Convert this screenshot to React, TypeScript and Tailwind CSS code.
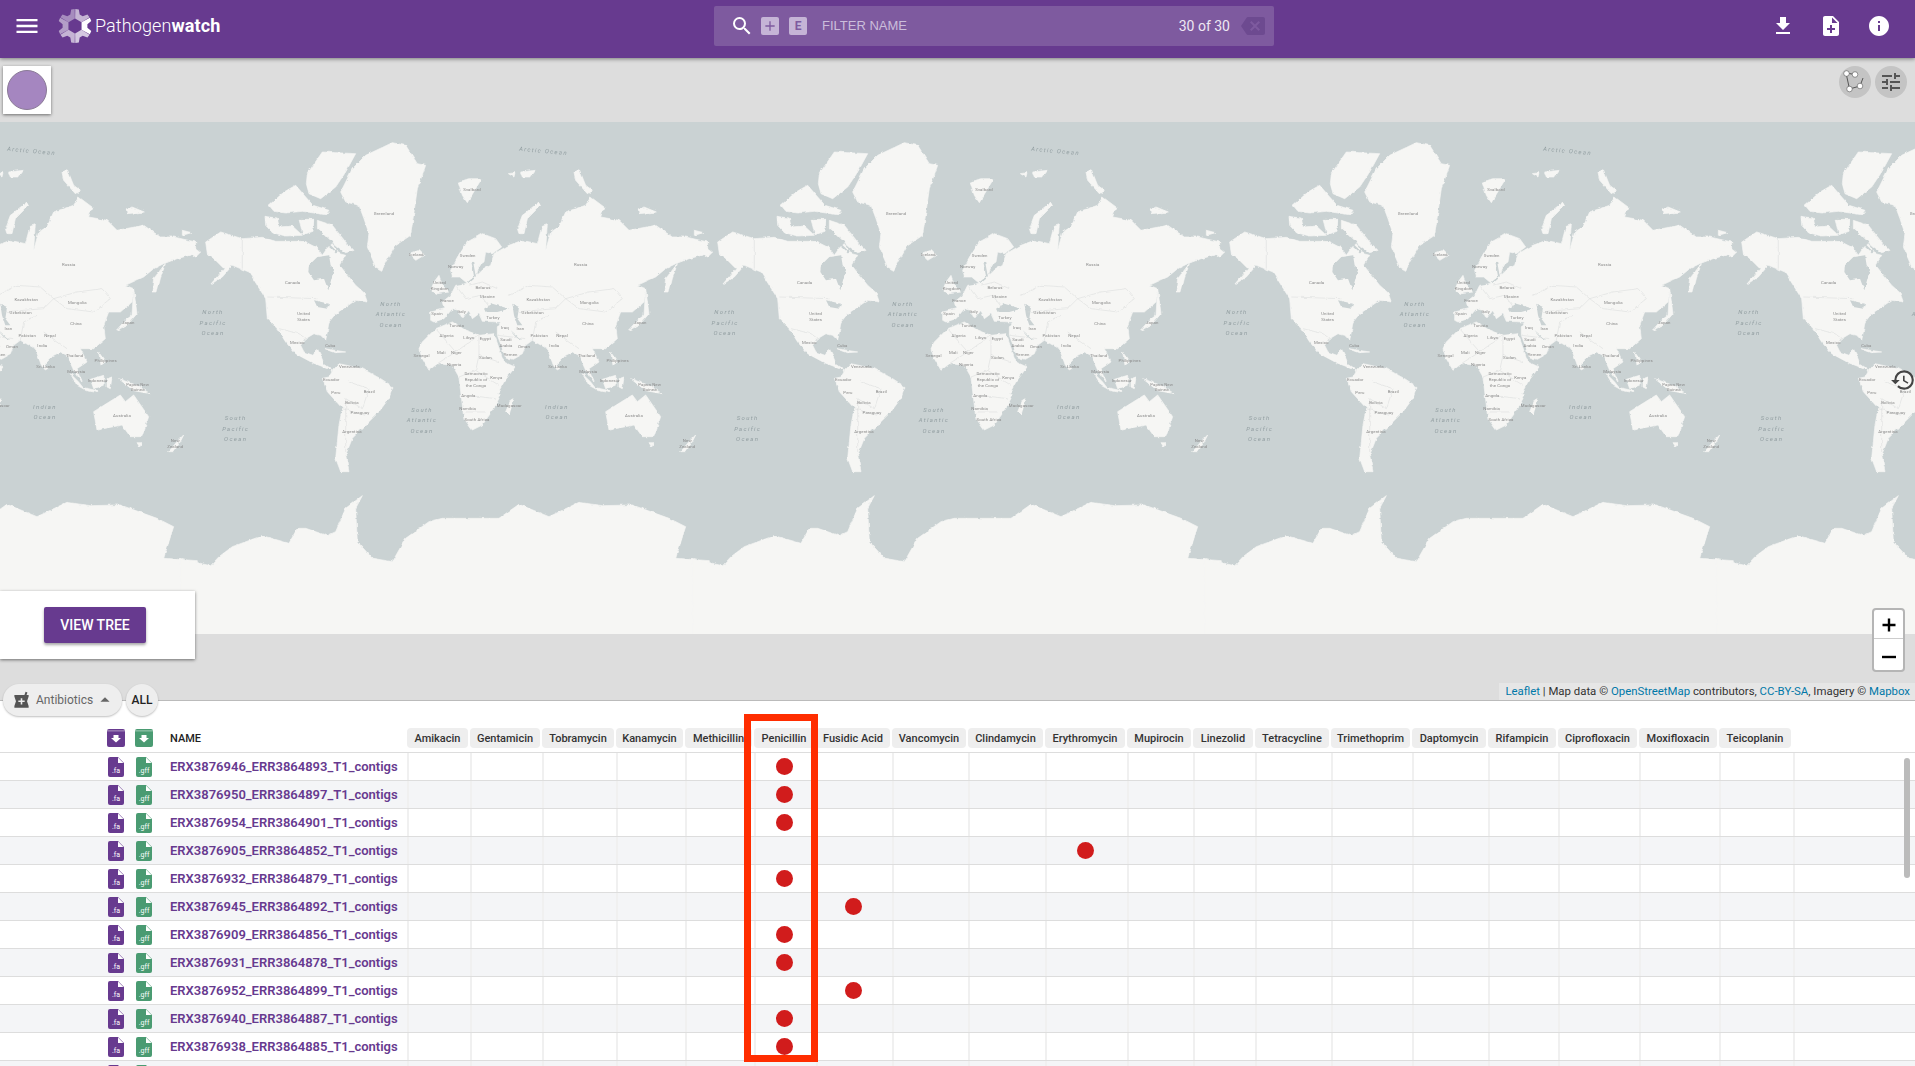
import { MdMenu, MdSearch, MdFileDownload, MdNoteAdd, MdInfo, MdTune, MdHistory, MdBackspace, MdArrowDropUp, MdLocalPharmacy, MdAdd } from 'react-icons/md'

const GRID = 'grid grid-cols-[407px_63px_72px_74px_69px_69px_62px_76px_76px_77px_82px_66px_62px_76px_81px_76px_70px_81px_80px_74px_1fr]'

const DRUGS = ['Amikacin', 'Gentamicin', 'Tobramycin', 'Kanamycin', 'Methicillin', 'Penicillin', 'Fusidic Acid', 'Vancomycin', 'Clindamycin', 'Erythromycin', 'Mupirocin', 'Linezolid', 'Tetracycline', 'Trimethoprim', 'Daptomycin', 'Rifampicin', 'Ciprofloxacin', 'Moxifloxacin', 'Teicoplanin']

const ROWS: [string, string][] = [
  ['ERX3876946_ERR3864893_T1_contigs', 'Penicillin'],
  ['ERX3876950_ERR3864897_T1_contigs', 'Penicillin'],
  ['ERX3876954_ERR3864901_T1_contigs', 'Penicillin'],
  ['ERX3876905_ERR3864852_T1_contigs', 'Erythromycin'],
  ['ERX3876932_ERR3864879_T1_contigs', 'Penicillin'],
  ['ERX3876945_ERR3864892_T1_contigs', 'Fusidic Acid'],
  ['ERX3876909_ERR3864856_T1_contigs', 'Penicillin'],
  ['ERX3876931_ERR3864878_T1_contigs', 'Penicillin'],
  ['ERX3876952_ERR3864899_T1_contigs', 'Fusidic Acid'],
  ['ERX3876940_ERR3864887_T1_contigs', 'Penicillin'],
  ['ERX3876938_ERR3864885_T1_contigs', 'Penicillin'],
  ['', ''], // only the tops of the icons show at the bottom edge
]

// land shapes, traced at 3x of one 512px map tile
const LAND = [
  'M50,360 L95,330 L160,350 L220,346 L260,358 L300,358 L345,358 L385,378 L400,400 L415,378 L430,365 L452,395 L470,400 L452,430 L472,455 L500,490 L525,512 L535,540 L500,535 L470,555 L440,575 L420,600 L415,630 L410,655 L395,640 L375,635 L350,650 L335,670 L345,690 L372,700 L385,680 L395,700 L405,725 L432,745 L418,740 L370,722 L320,695 L290,660 L265,620 L235,590 L230,530 L180,450 L130,430 L100,465 L65,487 L105,440 L75,410 L55,395 Z',
  'M385,295 L430,310 L470,360 L495,385 L470,392 L440,370 L410,340 L385,320 Z',
  'M228,283 L265,288 L270,315 L310,312 L340,340 L290,342 L250,332 L230,310 Z',
  'M330,292 L375,292 L372,328 L342,338 Z',
  'M355,155 L400,90 L500,95 L470,150 L440,195 L395,230 L360,215 L352,185 Z',
  'M240,250 L285,210 L320,190 L350,225 L372,250 L420,265 L410,278 L340,268 L290,273 L255,268 Z',
  'M455,210 L490,140 L530,100 L610,62 L650,70 L685,125 L710,130 L685,200 L675,270 L665,340 L620,370 L578,445 L560,435 L535,375 L540,335 L525,290 L510,250 L470,240 Z',
  'M660,395 L690,385 L705,400 L680,415 Z',
  'M735,480 L750,460 L760,490 L780,510 L745,515 L725,505 Z',
  'M808,180 L840,170 L878,170 L860,200 L835,242 L820,220 Z',
  'M985,320 L1000,280 L1050,240 L1055,250 L1015,290 L1005,335 L990,335 Z',
  'M958,155 L978,152 L975,165 Z M995,150 L1040,145 L1025,165 L1000,165 Z',
  'M1155,150 L1170,140 L1190,190 L1210,205 L1195,215 L1160,175 Z',
  'M1348,260 L1365,255 L1402,270 L1350,275 Z',
  'M1425,510 L1430,470 L1465,425 L1450,470 L1440,510 Z',
  'M1318,625 L1345,595 L1365,580 L1370,500 L1380,575 L1350,610 Z',
  'M-20,325 L8,332 L-20,340 Z M-20,365 L0,365 L35,390 L20,405 L0,390 L-20,385 Z',
  'M725,570 L765,560 L760,540 L785,520 L800,490 L835,484 L812,465 L790,465 L785,445 L810,400 L835,360 L880,335 L920,350 L938,375 L910,395 L890,390 L885,420 L870,430 L862,462 L880,445 L905,430 L915,395 L960,370 L1000,355 L1045,365 L1060,310 L1075,305 L1070,385 L1085,330 L1110,315 L1130,270 L1190,250 L1205,225 L1245,255 L1235,285 L1290,295 L1320,325 L1400,310 L1450,345 L1490,345 L1556,360 L1556,395 L1500,410 L1460,425 L1430,440 L1400,465 L1345,490 L1370,500 L1365,540 L1330,570 L1295,570 L1280,610 L1285,650 L1250,680 L1210,680 L1230,720 L1200,740 L1215,780 L1190,745 L1170,700 L1150,690 L1130,700 L1095,735 L1075,680 L1030,655 L1010,670 L1000,695 L970,712 L950,705 L925,640 L925,615 L935,600 L880,598 L870,575 L850,590 L840,565 L820,590 L808,565 L790,560 L765,590 L735,600 L725,595 Z',
  'M700,660 L740,620 L790,600 L830,625 L870,640 L915,635 L945,720 L978,735 L945,780 L925,815 L935,819 L915,859 L880,909 L850,924 L825,889 L815,809 L810,765 L790,730 L745,725 L720,745 L700,710 L690,680 Z',
  'M950,869 L965,834 L975,829 L960,879 Z',
  'M432,745 L450,725 L520,740 L575,770 L612,794 L600,829 L570,869 L530,909 L490,949 L470,999 L480,1049 L455,1049 L440,1009 L450,909 L460,859 L415,809 L400,769 L420,765 Z',
  'M-25,1312 L65,1331 L90,1304 L130,1274 L220,1241 L300,1264 L325,1219 L350,1219 L415,1241 L440,1229 L470,1159 L520,1121 L500,1159 L505,1259 L550,1309 L610,1319 L650,1249 L720,1199 L760,1189 L890,1189 L930,1189 L990,1147 L1080,1184 L1170,1141 L1240,1151 L1330,1149 L1440,1189 L1490,1214 L1460,1309 L1561,1316 L1561,1570 L-25,1570 Z',
  'M1250,869 L1290,844 L1330,819 L1345,839 L1370,819 L1415,884 L1395,944 L1360,944 L1335,909 L1260,924 Z',
  'M1380,962 L1395,962 L1388,975 Z',
  'M1475,989 L1500,959 L1520,939 L1510,959 L1490,989 Z',
  'M1180,755 L1205,780 L1222,802 L1200,790 Z M1215,796 L1262,806 L1262,812 L1225,805 Z',
  'M1240,772 L1280,760 L1282,790 L1250,800 Z M1290,770 L1305,765 L1300,800 L1290,795 Z',
  'M1325,770 L1380,790 L1420,815 L1370,806 Z',
  'M1265,690 L1285,720 L1272,730 Z M1100,725 L1112,740 L1102,745 Z',
  'M408,680 L470,690 L440,692 Z',
]

const WATER = [
  'M360,430 L385,405 L420,400 L425,430 L435,442 L418,505 L405,470 L375,475 L358,450 Z',
  'M885,560 L910,545 L960,560 L925,570 L890,570 Z',
  'M970,545 L990,555 L985,590 L1000,610 L985,610 L975,580 Z',
  'M375,535 L420,545 L415,560 L385,555 Z',
  'M965,625 L1000,655 L985,648 Z',
]

// straits cut through the land after it is drawn
const CHANNELS = [
  'M225,347 L300,352 L345,346 L382,350',
  'M378,288 L378,345',
  'M395,345 L445,392',
  'M235,280 L420,285',
  'M850,420 L858,465 L838,482',
]

const BORDERS = [
  'M160,350 L160,440', 'M235,525 L385,530',
  'M270,620 L330,635 L350,650',
  'M960,520 L1020,490 L1090,495 L1130,530 L1100,560 L1040,565 L980,570',
  'M1130,530 L1200,510 L1275,500 L1300,530 L1250,570 L1170,560 L1130,530',
  'M800,490 L830,530 L875,520 L905,560 M840,490 L880,480 L925,500',
  'M740,620 L800,690 M800,690 L870,640 L870,700 L930,720 M870,700 L860,745 L810,765 M745,725 L800,690',
  'M860,745 L930,790 M840,820 L920,830 M830,870 L890,870',
  'M925,640 L1010,650 M1030,655 L1040,600 L1080,580 M1100,630 L1170,680',
  'M480,780 L540,800 L520,860 L470,830 M460,860 L530,880 M470,830 L470,990',
]

const NAMES: [string, number, number][] = [
  ['Greenland', 585, 280], ['Svalbard', 849, 206], ['Iceland', 682, 403], ['Sweden', 836, 404], ['Norway', 800, 439], ['Russia', 1175, 432], ['Canada', 311, 485], ['United', 344, 580], ['States', 344, 598], ['Mexico', 325, 666], ['Cuba', 424, 676], ['Venezuela', 481, 739], ['Ecuador', 427, 776], ['Peru', 441, 815], ['Brazil', 541, 813], ['Bolivia', 489, 845], ['Paraguay', 513, 875], ['Argentina', 489, 934], ['United', 752, 486], ['Kingdom', 752, 504], ['Belarus', 882, 500], ['Ukraine', 895, 529], ['France', 774, 539], ['Spain', 744, 578], ['Italy', 818, 572], ['Turkey', 912, 590], ['Tunisia', 803, 616], ['Algeria', 773, 646], ['Libya', 839, 652], ['Egypt', 889, 655], ['Iraq', 948, 622], ['Iran', 994, 625], ['Saudi', 951, 656], ['Arabia', 951, 674], ['Oman', 1005, 678], ['Yemen', 965, 703], ['Pakistan', 1051, 646], ['Nepal', 1119, 646], ['India', 1096, 675], ['Kazakhstan', 1048, 537], ['Uzbekistan', 1031, 576], ['Mongolia', 1201, 545], ['China', 1197, 609], ['Japan', 1354, 605], ['Thailand', 1193, 706], ['Philippines', 1286, 721], ['Sri Lanka', 1106, 739], ['Malaysia', 1198, 752], ['Indonesia', 1262, 781], ['Papua New', 1382, 791], ['Guinea', 1382, 808], ['Senegal', 698, 706], ['Mali', 757, 696], ['Niger', 802, 696], ['Nigeria', 796, 731], ['Sudan', 889, 712], ['Democratic', 861, 759], ['Republic of', 861, 777], ['the Congo', 861, 795], ['Kenya', 922, 770], ['Angola', 838, 824], ['Namibia', 836, 864], ['South Africa', 864, 898], ['Madagascar', 961, 856], ['Australia', 1335, 886], ['New', 1495, 960], ['Zealand', 1495, 978],
]

const OCEANS: [string, number, number][] = [
  ['North', 72, 576], ['Pacific', 72, 608], ['Ocean', 72, 640],
  ['North', 606, 552], ['Atlantic', 606, 583], ['Ocean', 606, 615],
  ['South', 140, 895], ['Pacific', 140, 926], ['Ocean', 140, 958],
  ['South', 699, 869], ['Atlantic', 699, 901], ['Ocean', 699, 933],
  ['Indian', 1104, 860], ['Ocean', 1104, 892],
]

function WorldMap() {
  return (
    <svg className="block mt-[64px] blur-[0.45px]" width="1915" height="512" viewBox="0 0 1915 512">
      <defs>
        <filter id="coast" x="-5%" y="-5%" width="110%" height="110%">
          <feTurbulence type="fractalNoise" baseFrequency="0.06" numOctaves="3" seed="4" />
          <feDisplacementMap in="SourceGraphic" scale="9" xChannelSelector="R" yChannelSelector="G" />
        </filter>
        <g id="world" transform="scale(0.33333)">
          <g filter="url(#coast)">
            {LAND.map((d, i) => <path key={i} d={d} fill="#f6f6f4" stroke="#f6f6f4" strokeWidth="2" strokeLinejoin="round" />)}
            {WATER.map((d, i) => <path key={i} d={d} fill="#cad2d3" />)}
            {CHANNELS.map((d, i) => <path key={i} d={d} fill="none" stroke="#cad2d3" strokeWidth="5" />)}
            {BORDERS.map((d, i) => <path key={i} d={d} fill="none" stroke="#d9dbdb" strokeWidth="1.6" />)}
          </g>
          {NAMES.map(([t, x, y], i) => <text key={i} x={x} y={y} textAnchor="middle" fontSize="13" letterSpacing="0.3" fill="#8a8a8a" fontFamily="Roboto, sans-serif">{t}</text>)}
          {OCEANS.map(([t, x, y], i) => <text key={i} x={x} y={y} textAnchor="middle" fontSize="18" letterSpacing="4" fontStyle="italic" fill="#94a0a3" fontFamily="Roboto, sans-serif">{t}</text>)}
          <text x="1063" y="93" textAnchor="middle" fontSize="18" letterSpacing="4" fontStyle="italic" fill="#94a0a3" fontFamily="Roboto, sans-serif" transform="rotate(5 1063 93)">Arctic Ocean</text>
        </g>
      </defs>
      <rect width="1915" height="512" fill="#cad2d3" />
      {[-323, 189, 701, 1213, 1725].map(x => <use key={x} href="#world" x={x} />)}
    </svg>
  )
}

function Logo() {
  const seg = (a: number) => {
    const p = (r: number, d: number) => {
      const t = ((a + d) * Math.PI) / 180
      return `${(17 + r * Math.cos(t)).toFixed(2)},${(17 + r * Math.sin(t)).toFixed(2)}`
    }
    return `M${p(7.5, -29)} L${p(17, -29)} L${p(17, -17)} L${p(12.5, -8)} L${p(12.5, 8)} L${p(17, 17)} L${p(17, 29)} L${p(7.5, 29)} Z`
  }
  const parts: [number, number][] = [[0, 1], [60, 0.72], [120, 0.62], [180, 0.5], [240, 0.42], [300, 0.62]]
  return (
    <svg width="34" height="34" viewBox="0 0 34 34">
      {parts.map(([a, o]) => <path key={a} d={seg(a)} fill="#fff" fillOpacity={o} />)}
    </svg>
  )
}

function FileIcon({ ext, color }: { ext: string; color: string }) {
  return (
    <svg width="16" height="20" viewBox="0 0 16 20" className="shrink-0">
      <path d="M2 0 H10 L16 6 V18 a2 2 0 0 1 -2 2 H2 a2 2 0 0 1 -2 -2 V2 a2 2 0 0 1 2 -2 Z" fill={color} />
      <path d="M10 0.6 V6 H15.4 Z" fill="#fff" />
      {ext && <text x="8" y="16" textAnchor="middle" fontSize="7" fill="#fff" fontFamily="Roboto, sans-serif">{ext}</text>}
    </svg>
  )
}

function HeadIcon({ color }: { color: string }) {
  return (
    <svg width="18" height="18" viewBox="0 0 18 18" className="shrink-0">
      <rect width="18" height="18" rx="2" fill={color} />
      <rect y="1.5" width="18" height="0.8" fill="#fff" fillOpacity="0.6" />
      <path d="M6.5 6 H11.5 V9 H14 L9 13.5 L4 9 H6.5 Z" fill="#fff" />
    </svg>
  )
}

function NetworkIcon() {
  return (
    <svg width="24" height="24" viewBox="0 0 24 24">
      <path d="M3 3 L12 4.5 M3 3 L6.5 19 L17 16 L20 8" fill="none" stroke="#555" strokeWidth="1" />
      {[[3.5, 3.5], [12, 4.5], [6.5, 19], [17, 16]].map(([x, y]) => <circle key={x} cx={x} cy={y} r="2.8" fill="#fff" stroke="#555" strokeWidth="0.6" />)}
    </svg>
  )
}

export default function App() {
  return (
    <div className="relative h-[1066px] w-[1915px] overflow-hidden bg-white font-['Roboto',sans-serif]">
      <header className="relative z-20 h-[58px] bg-[#673a8f] flex items-center shadow-[0_1px_4px_rgba(0,0,0,0.45)] text-white">
        <MdMenu size={28} className="ml-[13px] mb-[6px]" />
        <div className="ml-[17px] mb-[6px] flex items-center">
          <Logo />
          <span className="ml-[3px] text-[18px] font-light tracking-[0.1px] leading-none">Pathogen<b className="font-bold">watch</b></span>
        </div>
        <div className="absolute left-[714px] top-[6px] w-[560px] h-[40px] rounded-[2px] bg-[#7e5a9f] flex items-center">
          <MdSearch size={24} className="ml-[16px]" />
          <span className="ml-[7px] w-[18px] h-[18px] rounded-[2px] bg-[#c5b4d6] flex items-center justify-center text-[#7e5a9f]"><MdAdd size={16} /></span>
          <span className="ml-[10px] w-[18px] h-[18px] rounded-[2px] bg-[#c5b4d6] flex items-center justify-center text-[#7e5a9f] text-[12px] font-bold">E</span>
          <span className="ml-[15px] text-[13px] text-[#cbbddb] font-['Liberation_Sans',sans-serif]">FILTER NAME</span>
          <span className="ml-auto text-[14px] text-[#eee8f3]">30 of 30</span>
          <MdBackspace size={24} className="ml-[11px] mr-[9px] text-[#6d4a90]" />
        </div>
        <div className="ml-auto mb-[6px] flex items-center">
          <MdFileDownload size={24} className="mr-[24px]" />
          <MdNoteAdd size={24} className="mr-[24px]" />
          <MdInfo size={24} className="mr-[24px]" />
        </div>
      </header>

      <section className="relative h-[642px] bg-[#dddddd] overflow-hidden">
        <WorldMap />
        <div className="absolute left-[3px] top-[8px] w-[48px] h-[48px] bg-white shadow-[0_1px_3px_rgba(0,0,0,0.5)] flex items-center justify-center">
          <span className="w-[40px] h-[40px] rounded-full bg-[#a586c0] border border-[#8a7a96]" />
        </div>
        <div className="absolute right-[8px] top-[8px] flex gap-[4px]">
          <span className="w-[32px] h-[32px] rounded-full bg-[#c4c4c4] flex items-center justify-center"><NetworkIcon /></span>
          <span className="w-[32px] h-[32px] rounded-full bg-[#c4c4c4] flex items-center justify-center text-[#555]"><MdTune size={24} /></span>
        </div>
        <span className="absolute -right-[1px] top-[309px] w-[26px] h-[26px] rounded-full flex items-center justify-center text-[#444]"><MdHistory size={26} /></span>
        <div className="absolute left-0 top-[533px] w-[195px] h-[68px] bg-white shadow-[0_1px_3px_rgba(0,0,0,0.5)] flex items-center justify-center">
          <button className="mr-[5px] w-[102px] h-[36px] rounded-[2px] bg-[#673a8f] text-white text-[14px] font-medium shadow-[0_2px_3px_rgba(0,0,0,0.35)]">VIEW TREE</button>
        </div>
        <div className="absolute right-[10px] top-[550px] w-[33px] h-[64px] rounded-[4px] border-2 border-[#b5b5b5] bg-white flex flex-col text-black">
          <span className="flex-1 flex items-center justify-center border-b border-[#ccc] pt-[2px]">
            <svg width="14" height="14" viewBox="0 0 14 14"><path d="M7 0.5 V13.5 M0.5 7 H13.5" stroke="#000" strokeWidth="2.4" /></svg>
          </span>
          <span className="flex-1 flex items-center justify-center pt-[5px]">
            <svg width="14" height="14" viewBox="0 0 14 14"><path d="M0 7 H14" stroke="#000" strokeWidth="2.4" /></svg>
          </span>
        </div>
        <div className="absolute right-0 bottom-0 h-[17px] pl-[6px] pr-[5px] bg-[#e6e6e6] text-[11.4px] leading-[17px] text-[#333] whitespace-nowrap">
          <span className="text-[#0078a8]">Leaflet</span> | Map data © <span className="text-[#0078a8]">OpenStreetMap</span> contributors, <span className="text-[#0078a8]">CC-BY-SA</span>, Imagery © <span className="text-[#0078a8]">Mapbox</span>
        </div>
      </section>

      <section className="relative border-t border-[#bbbbbb]">
        <div className="relative z-10 -mt-[17px] ml-[3px] h-[32px] flex items-center gap-[4px]">
          <div className="w-[119px] h-[32px] rounded-full bg-[#eeeeee] shadow-[0_1px_2px_rgba(0,0,0,0.25)] flex items-center pl-[9px] text-[12px] text-[#666]">
            <MdLocalPharmacy size={19} className="text-[#555]" />
            <span className="ml-[5px]">Antibiotics</span>
            <MdArrowDropUp size={22} className="ml-[1px] text-[#666]" />
          </div>
          <div className="w-[32px] h-[32px] rounded-full bg-[#eeeeee] shadow-[0_1px_2px_rgba(0,0,0,0.25)] flex items-center justify-center text-[12px] font-medium text-[#222]">ALL</div>
        </div>

        <div className={`${GRID} mt-[12px] h-[25px] border-b border-[#dddddd]`}>
          <div className="flex items-start pl-[107px] pt-[1px]">
            <HeadIcon color="#673a8f" />
            <span className="ml-[10px]"><HeadIcon color="#4a9b72" /></span>
            <span className="ml-[17px] text-[11px] font-medium text-[#222] leading-[20px]">NAME</span>
          </div>
          {DRUGS.map(d => (
            <div key={d} className="mr-[2px] h-[20px] rounded-[4px] bg-[#eeeeee] text-[11px] font-medium text-[#333] leading-[21px] text-center whitespace-nowrap overflow-hidden">{d}</div>
          ))}
        </div>

        {ROWS.map(([name, hit], i) => (
          <div key={i} className={`${GRID} h-[28px] border-b border-[#dddddd] ${i % 2 ? 'bg-[#f4f5f7]' : 'bg-white'}`}>
            <div className="flex items-center pl-[108px]">
              <FileIcon ext={name ? '.fa' : ''} color="#673a8f" />
              <span className="ml-[12px]"><FileIcon ext={name ? '.gff' : ''} color="#4a9b72" /></span>
              <span className="ml-[18px] text-[13px] font-semibold text-[#673a8f] whitespace-nowrap">{name}</span>
            </div>
            {DRUGS.map(d => (
              <div key={d} className="border-l-2 border-[#f0f0f0] flex items-center justify-center pr-[4px]">
                {d === hit && <span className="w-[17px] h-[17px] rounded-full bg-[#d11c1c]" />}
              </div>
            ))}
            <div className="border-l-2 border-[#f0f0f0]" />
          </div>
        ))}

        <div className="absolute right-[5px] top-[57px] w-[6px] h-[120px] rounded-full bg-[#bbbbbb]" />
      </section>

      <div className="absolute z-10 left-[744px] top-[714px] w-[74px] h-[348px] border-[7px] border-[#ff2d00]" />
    </div>
  )
}
